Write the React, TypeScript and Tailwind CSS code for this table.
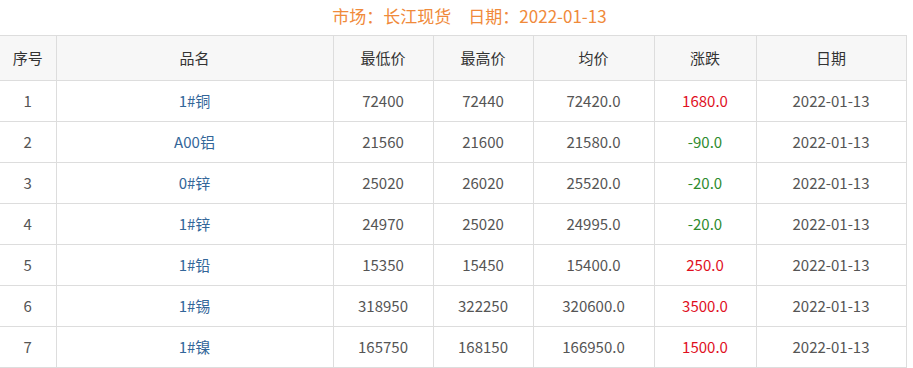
import React from 'react';

interface PriceRow {
  id: number;
  name: string;
  low: string;
  high: string;
  avg: string;
  change: string;
  date: string;
}

const rows: PriceRow[] = [
  { id: 1, name: '1#铜', low: '72400', high: '72440', avg: '72420.0', change: '1680.0', date: '2022-01-13' },
  { id: 2, name: 'A00铝', low: '21560', high: '21600', avg: '21580.0', change: '-90.0', date: '2022-01-13' },
  { id: 3, name: '0#锌', low: '25020', high: '26020', avg: '25520.0', change: '-20.0', date: '2022-01-13' },
  { id: 4, name: '1#锌', low: '24970', high: '25020', avg: '24995.0', change: '-20.0', date: '2022-01-13' },
  { id: 5, name: '1#铅', low: '15350', high: '15450', avg: '15400.0', change: '250.0', date: '2022-01-13' },
  { id: 6, name: '1#锡', low: '318950', high: '322250', avg: '320600.0', change: '3500.0', date: '2022-01-13' },
  { id: 7, name: '1#镍', low: '165750', high: '168150', avg: '166950.0', change: '1500.0', date: '2022-01-13' },
];

const headers = ['序号', '品名', '最低价', '最高价', '均价', '涨跌', '日期'];
const colWidths = ['w-[56px]', 'w-[277px]', 'w-[100px]', 'w-[100px]', 'w-[121px]', 'w-[102px]', 'w-[150px]'];

const App: React.FC = () => {
  return (
    <div className="w-[913px] h-[368px] bg-white overflow-hidden font-['Noto_Sans_CJK_SC','Liberation_Sans',sans-serif]">
      <div className="h-[35px] flex items-start justify-center pt-[3px] pl-[26px] text-[17px] leading-[26px] text-[#f08a3a]">
        市场：长江现货　日期：2022-01-13
      </div>
      <table className="w-[906px] border-collapse table-fixed text-[15px] text-[#555]">
        <colgroup>
          {colWidths.map((w, i) => (
            <col key={i} className={w} />
          ))}
        </colgroup>
        <thead>
          <tr className="h-[45px] bg-[#f7f7f7]">
            {headers.map((h) => (
              <th key={h} className="border border-[#dddddd] first:border-l-0 font-normal text-center text-[#333]">
                {h}
              </th>
            ))}
          </tr>
        </thead>
        <tbody>
          {rows.map((r) => (
            <tr key={r.id} className="h-[41px]">
              <td className="border border-[#dddddd] border-l-0 text-center">{r.id}</td>
              <td className="border border-[#dddddd] text-center text-[#336699]">{r.name}</td>
              <td className="border border-[#dddddd] text-center">{r.low}</td>
              <td className="border border-[#dddddd] text-center">{r.high}</td>
              <td className="border border-[#dddddd] text-center">{r.avg}</td>
              <td className={`border border-[#dddddd] text-center ${r.change.startsWith('-') ? 'text-[#2e8b2e]' : 'text-[#e0101e]'}`}>
                {r.change}
              </td>
              <td className="border border-[#dddddd] text-center">{r.date}</td>
            </tr>
          ))}
        </tbody>
      </table>
    </div>
  );
};

export default App;
